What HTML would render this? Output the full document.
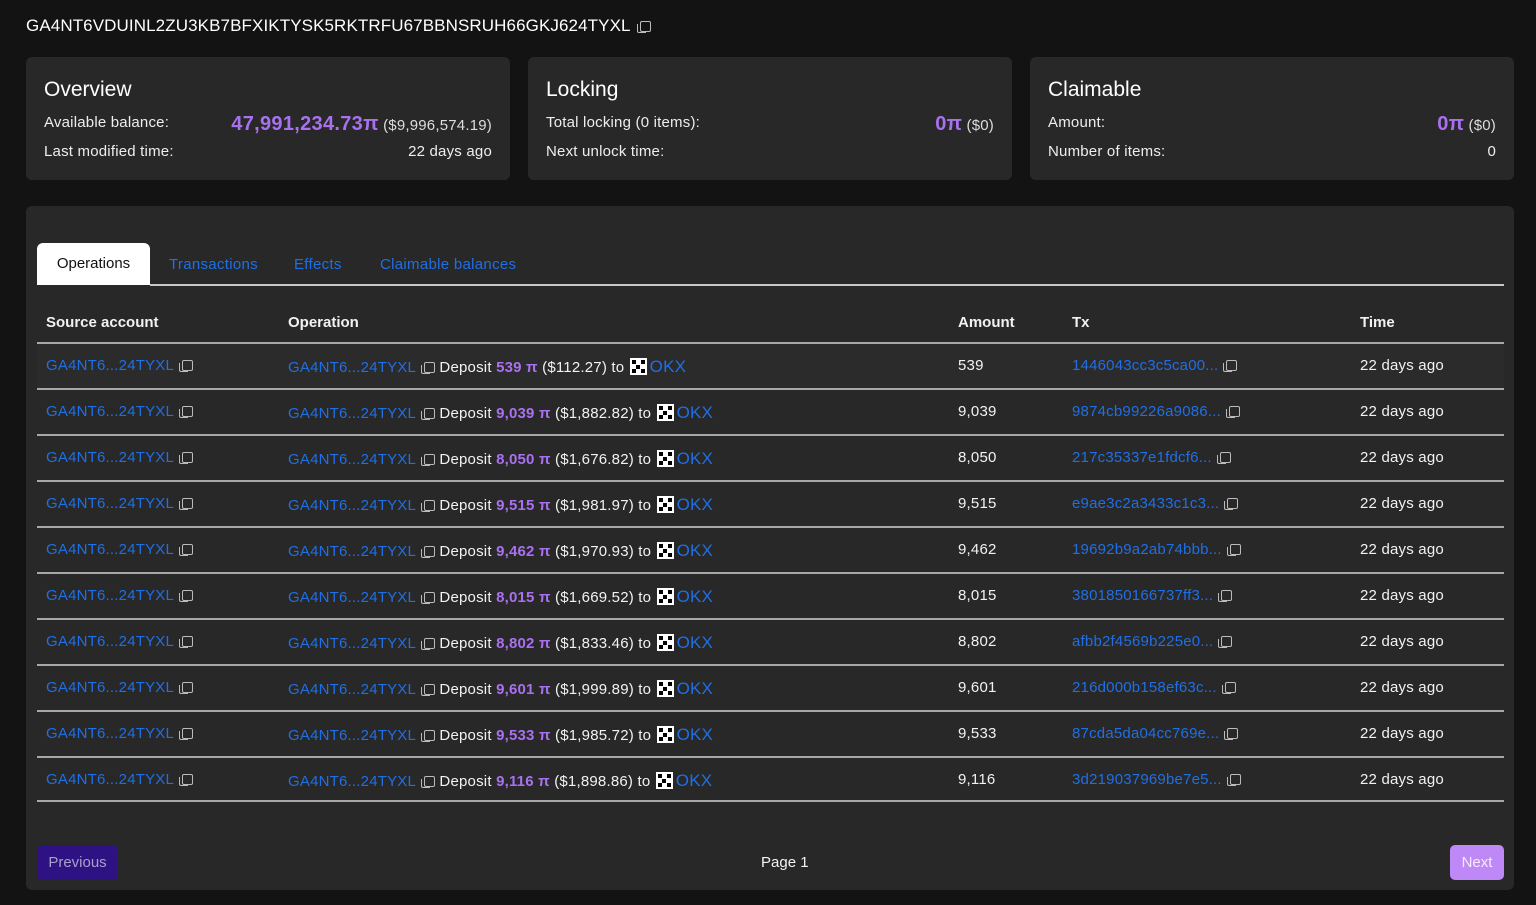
<!DOCTYPE html>
<html><head><meta charset="utf-8"><style>
*{box-sizing:border-box;margin:0;padding:0}
body{width:1536px;height:905px;background:#131313;font-family:"Liberation Sans",sans-serif;color:#f2f2f2;position:relative;overflow:hidden}
.abs{position:absolute}
.card{position:absolute;top:57px;height:123px;width:484px;background:#282828;border-radius:6px}
.card h2{position:absolute;left:18px;top:21px;font-size:21px;font-weight:normal;color:#fff}
.card .l{position:absolute;left:18px;font-size:15px;color:#eee;letter-spacing:0.2px}
.card .r{position:absolute;right:18px;font-size:15px;color:#eee;white-space:nowrap;letter-spacing:0.2px}
.pu{color:#a970f0;font-weight:bold}
.sm{font-size:15px;color:#ddd}
.panel{position:absolute;left:26px;top:206px;width:1488px;height:684px;background:#282828;border-radius:6px}
.tab{position:absolute;top:256px;font-size:15px;color:#1f6fe5;letter-spacing:0.3px}
a,.lk{color:#1f6fe5}
.row{position:absolute;left:37px;width:1467px;height:46px;border-top:2px solid #a8a8a8;font-size:15px}
.row span.c{position:absolute;top:13px;white-space:nowrap;letter-spacing:0.2px}
.cp{display:inline-block;width:11px;height:11px;border:1.3px solid #bbb;border-radius:2px;position:relative;margin-left:8px;vertical-align:-1px}
.cp:after{content:"";position:absolute;left:-4px;top:2px;width:8px;height:8px;border-left:1.3px solid #bbb;border-bottom:1.3px solid #bbb;border-radius:0 0 0 2px}
.okx{display:inline-block;width:17px;height:17px;background:#fff;vertical-align:-3px;margin:0 3px 0 1px;position:relative}
.okx i{position:absolute;width:4px;height:4px;background:#000}
</style></head><body>
<div class="abs" style="left:26px;top:16px;font-size:17px;color:#fff;letter-spacing:0.1px">GA4NT6VDUINL2ZU3KB7BFXIKTYSK5RKTRFU67BBNSRUH66GKJ624TYXL<span class="cp" style="margin-left:9px"></span></div>

<div class="card" style="left:26px"><h2>Overview</h2>
<div class="l" style="top:57px">Available balance:</div><div class="r" style="top:56px"><span class="pu" style="font-size:20px;letter-spacing:0.3px">47,991,234.73π</span> <span class="sm">($9,996,574.19)</span></div>
<div class="l" style="top:86px">Last modified time:</div><div class="r" style="top:86px">22 days ago</div></div>
<div class="card" style="left:528px"><h2>Locking</h2>
<div class="l" style="top:57px">Total locking (0 items):</div><div class="r" style="top:56px"><span class="pu" style="font-size:20px">0π</span> <span class="sm">($0)</span></div>
<div class="l" style="top:86px">Next unlock time:</div></div>
<div class="card" style="left:1030px"><h2>Claimable</h2>
<div class="l" style="top:57px">Amount:</div><div class="r" style="top:56px"><span class="pu" style="font-size:20px">0π</span> <span class="sm">($0)</span></div>
<div class="l" style="top:86px">Number of items:</div><div class="r" style="top:86px">0</div></div>

<div class="panel"></div>
<div class="abs" style="left:37px;top:243px;width:113px;height:42px;background:#fff;border-radius:6px 6px 0 0;color:#111;font-size:15px;text-align:center;line-height:42px">Operations</div>
<div class="abs" style="left:150px;top:284px;width:1354px;height:2px;background:#c8c8c8"></div>
<div class="tab" style="left:169px">Transactions</div>
<div class="tab" style="left:294px">Effects</div>
<div class="tab" style="left:380px">Claimable balances</div>

<div class="abs" style="top:314px;left:46px;font-size:15px;font-weight:bold">Source account</div>
<div class="abs" style="top:314px;left:288px;font-size:15px;font-weight:bold">Operation</div>
<div class="abs" style="top:314px;left:958px;font-size:15px;font-weight:bold">Amount</div>
<div class="abs" style="top:314px;left:1072px;font-size:15px;font-weight:bold">Tx</div>
<div class="abs" style="top:314px;left:1360px;font-size:15px;font-weight:bold">Time</div>

<div id="rows"></div>
<div class="abs" style="left:37px;top:800px;width:1467px;height:2px;background:#a8a8a8"></div>

<div class="abs" style="left:37px;top:845px;width:81px;height:35px;background:#2e1183;border-radius:5px;color:#a9a0c8;font-size:15px;text-align:center;line-height:35px">Previous</div>
<div class="abs" style="left:761px;top:854px;font-size:15px">Page 1</div>
<div class="abs" style="left:1450px;top:845px;width:54px;height:35px;background:#bf88f7;border-radius:5px;color:#f4eaff;font-size:15px;text-align:center;line-height:35px">Next</div>

<script>
var d=[["539","112.27","1446043cc3c5ca00..."],["9,039","1,882.82","9874cb99226a9086..."],["8,050","1,676.82","217c35337e1fdcf6..."],["9,515","1,981.97","e9ae3c2a3433c1c3..."],["9,462","1,970.93","19692b9a2ab74bbb..."],["8,015","1,669.52","3801850166737ff3..."],["8,802","1,833.46","afbb2f4569b225e0..."],["9,601","1,999.89","216d000b158ef63c..."],["9,533","1,985.72","87cda5da04cc769e..."],["9,116","1,898.86","3d219037969be7e5..."]];
var okx='<span class="okx"><i style="left:2px;top:2px"></i><i style="left:11px;top:2px"></i><i style="left:6.5px;top:6.5px"></i><i style="left:2px;top:11px"></i><i style="left:11px;top:11px"></i></span>';
var h='';
d.forEach(function(r,i){
h+='<div class="row" style="top:'+(342+i*46)+'px;'+(i==0?'background:#2b2b2b':'')+'">'+
'<span class="c lk" style="left:9px">GA4NT6...24TYXL<span class="cp"></span></span>'+
'<span class="c" style="left:251px"><span class="lk">GA4NT6...24TYXL</span><span class="cp"></span> Deposit <span class="pu">'+r[0]+' π</span> ($'+r[1]+') to '+okx+'<span class="lk" style="font-size:17px">OKX</span></span>'+
'<span class="c" style="left:921px">'+r[0]+'</span>'+
'<span class="c lk" style="left:1035px">'+r[2]+'<span class="cp"></span></span>'+
'<span class="c" style="left:1323px">22 days ago</span></div>';});
document.getElementById('rows').innerHTML=h;
</script>
</body></html>
